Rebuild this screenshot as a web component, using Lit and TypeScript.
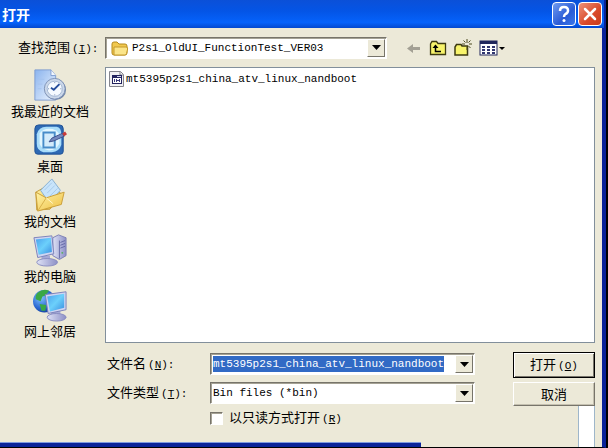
import { LitElement, html, css, svg } from "lit";
import { customElement } from "lit/decorators.js";

const folder = html`<svg class="ico" width="18" height="16" viewBox="0 0 18 16" aria-hidden="true">
  <path d="M1 4Q1 2 3 2H6L8 4H14Q16 4 16 6V13Q16 15 14 15H3Q1 15 1 13Z" fill="#f1c84e" stroke="#b58a1c"/>
  <path d="M3 7H15Q17 7 16.600 9L15.500 13.500Q15 15 13.500 15H3Z" fill="#fbe58a" stroke="#c59a2a"/></svg>`;

const fileIcon = html`<svg class="ico" width="16" height="16" viewBox="0 0 16 16" aria-hidden="true">
  <path d="M.5 .5H11.500L14.500 3.500V15.500H.5Z" fill="#f0f0f3" stroke="#85858d"/>
  <path d="M11 1V4H14" fill="none" stroke="#85858d"/>
  <rect x="3" y="4" width="10" height="9" fill="#22225e"/><rect x="4" y="7" width="8" height="5" fill="#fff"/>
  <path d="M5.500 8V11M7.500 8V11M10.500 8V11M8 9.500H10" stroke="#3a3a7a" fill="none"/>
  <path d="M8 5.500H12" stroke="#cfd3ee"/></svg>`;

const arrow = html`<svg width="9" height="5" viewBox="0 0 9 5" aria-hidden="true"><path d="M0 0H9L4.500 5Z" fill="#000"/></svg>`;

const defs = svg`<defs>
  <linearGradient id="scr" x1="0" y1="0" x2="1" y2="1"><stop offset="0" stop-color="#4aa0ec"/><stop offset=".5" stop-color="#6cd0fb"/><stop offset="1" stop-color="#3a8de0"/></linearGradient>
  <linearGradient id="pap" x1="0" y1="0" x2="1" y2="1"><stop offset="0" stop-color="#8bb4ee"/><stop offset="1" stop-color="#eef5ff"/></linearGradient>
  <linearGradient id="met" x1="0" y1="0" x2="1" y2="0"><stop offset="0" stop-color="#dfe2f6"/><stop offset="1" stop-color="#8d90c6"/></linearGradient>
  <linearGradient id="yel" x1="0" y1="0" x2="1" y2="1"><stop offset="0" stop-color="#fff3a8"/><stop offset="1" stop-color="#eebf42"/></linearGradient>
  <radialGradient id="glb" cx=".35" cy=".35" r=".75"><stop offset="0" stop-color="#7fc4ff"/><stop offset=".6" stop-color="#2b68d2"/><stop offset="1" stop-color="#123a94"/></radialGradient>
</defs>`;

const recent = svg`
  <path d="M2 2H19L24 8V34H2Z" fill="url(#pap)" stroke="#7d9bd0"/>
  <path d="M19 2V8H24" fill="#f3f8ff" stroke="#7d9bd0"/>
  <path d="M5 12H12M5 17H10M5 22H9" stroke="#a5c2ee"/>
  <circle cx="24" cy="23" r="11" fill="#7186a8"/>
  <circle cx="23" cy="22" r="11" fill="#cbd8ea" stroke="#7c90b5"/>
  <circle cx="23" cy="22" r="8" fill="#f5faff" stroke="#a3b6d2"/>
  <path d="M23 15V16M23 28V29M16 22H17M29 22H30" stroke="#6f86b0"/>
  <path d="M28 17L22 23L19 21" fill="none" stroke="#274f9c" stroke-width="2"/>`;
const desktop = svg`
  <path d="M6 2H28Q32 2 32 6V30Q32 33 29 33H5Q2 33 2 30V6Q2 2 6 2Z" fill="#2d69b4" stroke="#1d4f94"/>
  <path d="M4 12Q6 4 14 4H25Q30 5 30 12V23Q28 30 20 31H11Q4 29 4 22Z" fill="#a9ddfa"/>
  <path d="M7 11Q10 6 17 6Q25 6 28 12V22Q24 29 17 29Q9 28 7 22Z" fill="#e2f6ff"/>
  <path d="M11 10H23V26H11Z" fill="#d3ebfb" stroke="#478cc9" stroke-width="2"/>
  <path d="M17 20L20 16L31 11L33 14L22 19Z" fill="#7488bd" stroke="#3b4e8b"/>
  <path d="M31 11L34 9L36 12L33 14Z" fill="#c93a3a"/>`;
const docs = svg`
  <path d="M3 15L19 6L31 18L18 33L4 34Z" fill="url(#yel)" stroke="#c49a35"/>
  <path d="M8 13L20 1L29 13L17 26Z" fill="#c8e4fa" stroke="#86add0"/>
  <path d="M12 13L20 5M15 16L23 8M18 19L26 11" stroke="#a5c9ea"/>
  <path d="M3 15L14 21L33 15L30 28L5 35Z" fill="url(#yel)" stroke="#c99d37"/>
  <path d="M5 35L14 21" stroke="#d7ae48"/><path d="M14 21L21 27" stroke="#fff8cf"/>`;
const computer = svg`
  <path d="M21 5L27 2L35 5V24L28 28L21 24Z" fill="url(#met)" stroke="#7b7eb5"/>
  <path d="M28 8V27M29 10L34 8M29 13L34 11M29 16L34 14" stroke="#6468a6"/><circle cx="31" cy="21" r="1" fill="#54b25c"/>
  <path d="M9 24H18V29H9Z" fill="#a5a9d6"/><ellipse cx="15" cy="31" rx="11" ry="4" fill="url(#met)" stroke="#888cc0"/>
  <path d="M1 5L20 3L22 22L5 26Z" fill="#cfd5f2" stroke="#7a80b8"/><path d="M3 7L19 5L20 20L6 23Z" fill="url(#scr)"/>`;
const network = svg`
  <circle cx="12" cy="14" r="12" fill="url(#glb)"/>
  <path d="M5 5Q11 0 17 3L13 8L10 9L8 14L3 12Q2 8 5 5ZM7 17L14 18L13 24L9 24Z" fill="#3aa845"/>
  <path d="M19 24H29V30H19Z" fill="#a5a9d6"/><ellipse cx="25" cy="31" rx="10" ry="4" fill="url(#met)" stroke="#888cc0"/>
  <path d="M13 7L35 4V23L16 27Z" fill="#cfd5f2" stroke="#7a80b8"/><path d="M15 9L33 6V21L18 25Z" fill="url(#scr)"/>`;

const places = [
  { name: "我最近的文档", art: recent },
  { name: "桌面", art: desktop },
  { name: "我的文档", art: docs },
  { name: "我的电脑", art: computer },
  { name: "网上邻居", art: network },
];

const key = (k: string, tail = "") => html`<span class="key">(<u>${k}</u>)${tail}</span>`;

@customElement("app-root")
export class AppRoot extends LitElement {
  static styles = css`
    :host { display: block; background: #000; padding-right: 2px;
      font: 13px/16px "Noto Sans CJK SC", sans-serif; color: #000; }
    * { box-sizing: border-box; }
    button, input, select { font: inherit; color: inherit; margin: 0; padding: 0; border: 0; border-radius: 0; background: none; }
    .window { position: relative; display: flex; flex-direction: column; min-height: 100vh;
      background: #ece9d8; border-right: 4px solid #0a2399; border-bottom: 1px solid #000; }
    .title { display: flex; align-items: center; gap: 2px; height: 28px; padding: 0 2px; margin-right: -2px;
      background: linear-gradient(#0b50d8, #0455e6 40%, #0562fb 80%, #0348cf); }
    .title h1 { flex: 1; margin: 0; color: #fff; font-size: 14px; line-height: 20px; font-weight: 700; }
    .cap { width: 24px; height: 24px; border: 1px solid #fff; border-radius: 4px; display: grid; place-items: center;
      background: linear-gradient(135deg, #6f9bf0, #2a5bd6 60%, #3c78ea); }
    .close { background: linear-gradient(135deg, #ee9279, #d9492a 60%, #c83c1c); }
    .look { display: flex; align-items: center; height: 39px; padding-left: 18px; }
    .look > label { width: 87px; }
    .key, .combo, .files { font-family: "Liberation Mono", "Noto Sans CJK SC", monospace; font-size: 11px; }
    .key { padding-left: 2px; }
    .combo { display: flex; align-items: center; height: 22px; background: #fff; padding: 1px;
      border: 1px solid; border-color: #77746a #fff #fff #77746a; box-shadow: inset 1px 1px #a5a294; }
    .combo select { flex: 1; min-width: 0; height: 18px; appearance: none; outline: 0; padding-left: 1px; }
    .combo .ico { margin: 0 2px 0 4px; }
    .drop { width: 18px; height: 18px; display: grid; place-items: center; background: #ece9d8; pointer-events: none;
      border: 1px solid; border-color: #fff #77746a #77746a #fff; }
    .name { height: 16px; width: 35ch; margin: 0 auto 0 1px; background: #316ac5; color: #fff; outline: 0; }
    .look .combo { flex: 0 1 282px; }
    .tools { display: flex; align-items: center; gap: 6px; margin-left: 18px; }
    .tools button { display: block; height: 18px; }
    .tools svg { display: block; }
    .main { display: flex; flex: 1; padding-right: 7px; }
    .places { width: 105px; display: flex; flex-direction: column; align-items: center; padding: 1px 5px 0 0; }
    .places button { height: 55px; display: flex; flex-direction: column; align-items: center; white-space: nowrap; line-height: 18px; }
    .content { flex: 1; min-width: 0; display: flex; flex-direction: column; }
    .files { flex: 1; margin: 0; padding: 3px; list-style: none; background: #fff; border: 1px solid #828f9b; }
    .files li { display: flex; align-items: center; gap: 1px; height: 16px; }
    .form { display: flex; height: 104px; padding-top: 9px; }
    .fields { flex: 0 1 371px; display: grid; grid-template-columns: 103px 1fr; grid-template-rows: 24px 34px 16px; align-items: center; align-content: start; padding-left: 2px; }
    .fields .combo { margin-right: 1px; }
    .check { grid-column: 2; display: flex; align-items: center; gap: 6px; }
    .check input { appearance: none; width: 13px; height: 13px; background: #fff; border: 1px solid;
      border-color: #77746a #fff #fff #77746a; box-shadow: inset 1px 1px #a5a294; }
    .actions { width: 82px; margin-left: auto; display: flex; flex-direction: column; }
    .actions button { height: 24px; margin-bottom: 4px; border: 1px solid; border-color: #fff #77746a #77746a #fff; box-shadow: inset -1px -1px #c4c0b0; }
    .actions .ok { height: 26px; border: 1px solid #000; box-shadow: inset 1px 1px #fff, inset -1px -1px #77746a; }
    .actions .no { margin: 0; }
    .strip { flex: 1; width: 17px; align-self: flex-end; background: #fff; border: solid #9eb6ca; border-width: 0 1px; }
    .edge { position: absolute; left: 0; bottom: 0; width: 70%; height: 5px; background: #0a2399; border-top: 1px solid #7f9be0; }
  `;

  render() {
    return html`<div class="window">
      <header class="title">
        <h1>打开</h1>
        <button class="cap" aria-label="帮助"><svg width="16" height="18" viewBox="0 0 16 18"><path d="M4 6Q4 2 8 2Q12 2 12 5.500Q12 8 9.500 9Q8 10 8 12" fill="none" stroke="#fff" stroke-width="2.500"/><circle cx="8" cy="15.500" r="1.500" fill="#fff"/></svg></button>
        <button class="cap close" aria-label="关闭"><svg width="16" height="16" viewBox="0 0 16 16"><path d="M3 3L13 13M13 3L3 13" stroke="#fff" stroke-width="2.500" stroke-linecap="round"/></svg></button>
      </header>
      <div class="look">
        <label for="dir">查找范围${key("I", ":")}</label>
        <div class="combo">${folder}<select id="dir"><option>P2s1_OldUI_FunctionTest_VER03</option></select><span class="drop">${arrow}</span></div>
        <div class="tools">
          <button aria-label="后退"><svg width="18" height="18" viewBox="0 0 18 18"><path d="M2 9.500L8 5V8H15V11H8V14Z" fill="#a3a094"/></svg></button>
          <button aria-label="向上一级"><svg width="18" height="18" viewBox="0 0 18 18"><path d="M1.500 5V15.500H16.500V4.500H9L7.500 2.500H3Z" fill="#f8f46c" stroke="#3d3a10" stroke-width="1.300"/><path d="M6.500 8V12.500H12" fill="none" stroke="#000" stroke-width="1.500"/><path d="M3.500 9L6.500 5.500L9.500 9Z" fill="#000"/></svg></button>
          <button aria-label="新建文件夹"><svg width="20" height="18" viewBox="0 0 20 18"><path d="M2 8V16H14.500V7H9L8 5.500H3.500Z" fill="#f8f46c" stroke="#3d3a10" stroke-width="1.500"/><path d="M14 0V4M14 8V11M9 5H12M16 5H19M10.500 1.500L12.500 3.500M17.500 1.500L15.500 3.500M17.500 9L15.500 7" stroke="#4d4a20"/></svg></button>
          <button aria-label="查看"><svg width="26" height="18" viewBox="0 0 26 18"><rect x="1" y="2" width="17" height="14" fill="#fff" stroke="#20275c"/><path d="M1 2H18V5H1Z" fill="#20275c"/><path d="M3 8H6M8 8H11M13 8H16M3 11H6M8 11H11M13 11H16M3 14H6M8 14H11M13 14H16" stroke="#31366f" stroke-width="2"/><path d="M20 8H26L23 11Z" fill="#000"/></svg></button>
        </div>
      </div>
      <div class="main">
        <nav class="places">
          ${places.map((p) => html`<button><svg width="34" height="34" viewBox="0 0 36 36" aria-hidden="true">${defs}${p.art}</svg><span>${p.name}</span></button>`)}
        </nav>
        <div class="content">
          <ul class="files"><li>${fileIcon}<span>mt5395p2s1_china_atv_linux_nandboot</span></li></ul>
          <div class="form">
            <div class="fields">
              <label for="name">文件名${key("N", ":")}</label>
              <div class="combo"><input id="name" class="name" value="mt5395p2s1_china_atv_linux_nandboot"><button class="drop" aria-label="文件名列表">${arrow}</button></div>
              <label for="type">文件类型${key("T", ":")}</label>
              <div class="combo"><select id="type"><option>Bin files (*bin)</option></select><span class="drop">${arrow}</span></div>
              <label class="check"><input type="checkbox"><span>以只读方式打开${key("R")}</span></label>
            </div>
            <div class="actions">
              <button class="ok">打开${key("O")}</button>
              <button class="no">取消</button>
              <div class="strip"></div>
            </div>
          </div>
        </div>
      </div>
      <div class="edge"></div>
    </div>`;
  }
}
